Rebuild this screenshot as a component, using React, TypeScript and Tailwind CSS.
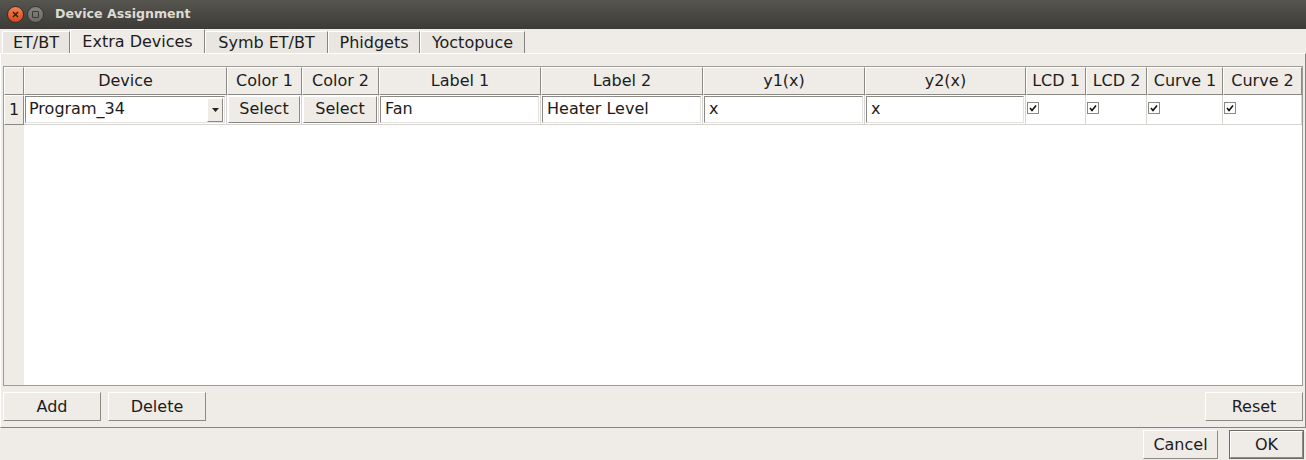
import React from "react";

const font = { fontFamily: '"DejaVu Sans", "Liberation Sans", sans-serif' };

const cols = [
  { label: "Device", w: 203 },
  { label: "Color 1", w: 75 },
  { label: "Color 2", w: 77 },
  { label: "Label 1", w: 162 },
  { label: "Label 2", w: 162 },
  { label: "y1(x)", w: 162 },
  { label: "y2(x)", w: 161 },
  { label: "LCD 1", w: 60 },
  { label: "LCD 2", w: 61 },
  { label: "Curve 1", w: 76 },
  { label: "Curve 2", w: 79 },
];

const tabs = [
  { text: "ET/BT", w: 68 },
  { text: "Extra Devices", w: 135, active: true },
  { text: "Symb ET/BT", w: 123 },
  { text: "Phidgets", w: 92 },
  { text: "Yoctopuce", w: 105 },
];

const raised =
  "bg-[#efebe7] border border-t-white border-l-white border-r-[#8c8985] border-b-[#8c8985]";
const sunken =
  "bg-white border border-t-[#8c8985] border-l-[#8c8985] border-r-[#e4e2de] border-b-[#e4e2de]";

const Button: React.FC<{ text: string; w: number; isDefault?: boolean }> = ({
  text,
  w,
  isDefault,
}) => (
  <div
    className={`h-[29px] flex items-center justify-center text-[16px] text-[#1c1c1c] ${
      isDefault ? "border border-[#6e6c68] p-0" : ""
    }`}
    style={{ width: w }}
  >
    <div className={`w-full h-full flex items-center justify-center ${raised}`}>
      {text}
    </div>
  </div>
);

const Check: React.FC = () => (
  <div className="w-[12px] h-[12px] bg-white border border-[#8c8985] flex items-center justify-center">
    <svg width="8" height="8" viewBox="0 0 8 8">
      <path d="M1 4 L3 6.5 L7 1.5" stroke="#111" strokeWidth="1.6" fill="none" />
    </svg>
  </div>
);

const TitleBar: React.FC = () => (
  <div className="h-[29px] flex items-center bg-linear-to-b from-[#57554f] to-[#3c3b37]">
    <div className="ml-[7px] w-[17px] h-[17px] rounded-full bg-linear-to-b from-[#f4814e] to-[#d9461a] border border-[#3a2a20] flex items-center justify-center">
      <svg width="7" height="7" viewBox="0 0 7 7">
        <path d="M1 1 L6 6 M6 1 L1 6" stroke="#3b2015" strokeWidth="1.6" />
      </svg>
    </div>
    <div className="ml-[3px] w-[17px] h-[17px] rounded-full bg-linear-to-b from-[#86847f] to-[#6c6a65] border border-[#35342f] flex items-center justify-center">
      <div className="w-[7px] h-[7px] rounded-[1px] border border-[#3a3935]" />
    </div>
    <span className="ml-[11px] text-[12.6px] font-bold text-[#dfdbd2]">
      Device Assignment
    </span>
  </div>
);

const Tabs: React.FC = () => (
  <div className="h-[24px] flex items-end pl-[2px]">
    {tabs.map((t) => (
      <div
        key={t.text}
        className={`flex items-center justify-center text-[16px] text-[#1c1c1c] border-l border-t border-r border-l-white border-t-white border-r-[#86837e] ${
          t.active ? "h-[24px] bg-[#efebe7]" : "h-[22px] bg-[#e9e6e1]"
        }`}
        style={{ width: t.w }}
      >
        {t.text}
      </div>
    ))}
  </div>
);

const Table: React.FC = () => (
  <div className="h-[320px] border border-[#9e9b96] bg-white flex flex-col">
    {/* header */}
    <div className="flex h-[28px]">
      <div className={`w-[20px] ${raised}`} />
      {cols.map((c) => (
        <div
          key={c.label}
          className={`flex items-center justify-center text-[16px] text-[#1c1c1c] ${raised}`}
          style={{ width: c.w }}
        >
          {c.label}
        </div>
      ))}
    </div>
    {/* row 1 */}
    <div className="flex h-[30px]">
      <div className={`w-[20px] flex items-center pl-[4px] pb-[1px] text-[16px] text-[#1c1c1c] ${raised}`}>
        1
      </div>
      {/* device combo */}
      <div className="w-[203px] border-r border-b border-[#d6d4d0] p-[1px]">
        <div className={`h-full flex items-center ${sunken}`}>
          <span className="flex-1 pl-[3px] pb-[1px] text-[16px] text-[#1c1c1c]">Program_34</span>
          <div className={`w-[16px] h-[24px] mr-[1px] flex items-center justify-center ${raised}`}>
            <svg width="7" height="4" viewBox="0 0 7 4">
              <path d="M0 0 L7 0 L3.5 4 Z" fill="#222" />
            </svg>
          </div>
        </div>
      </div>
      {[75, 77].map((w, i) => (
        <div key={i} className="border-r border-b border-[#d6d4d0] p-[1px]" style={{ width: w }}>
          <div className={`h-full flex items-center justify-center pb-[1px] text-[16px] text-[#1c1c1c] ${raised}`}>
            Select
          </div>
        </div>
      ))}
      {[
        { t: "Fan", w: 162 },
        { t: "Heater Level", w: 162 },
        { t: "x", w: 162 },
        { t: "x", w: 161 },
      ].map((f, i) => (
        <div key={i} className="border-r border-b border-[#d6d4d0] p-[1px]" style={{ width: f.w }}>
          <div className={`h-full flex items-center pl-[4px] pb-[1px] text-[16px] text-[#1c1c1c] ${sunken}`}>
            {f.t}
          </div>
        </div>
      ))}
      {[60, 61, 76, 79].map((w, i) => (
        <div
          key={i}
          className="border-r border-b border-[#d6d4d0] pl-[1px] pt-[7px]"
          style={{ width: w }}
        >
          <Check />
        </div>
      ))}
    </div>
    {/* empty body */}
    <div className="flex-1 flex">
      <div className="w-[20px] bg-[#efebe7]" />
      <div className="flex-1 bg-white" />
    </div>
  </div>
);

export default function App() {
  return (
    <div
      className="w-[1306px] h-[460px] bg-[#efebe7] flex flex-col overflow-hidden"
      style={font}
    >
      <TitleBar />
      <Tabs />
      <div className="h-[375px] border border-l-white border-t-white border-r-[#86837e] border-b-[#86837e] pt-[12px] px-[2px]">
        <Table />
        <div className="flex mt-[6px]">
          <Button text="Add" w={98} />
          <div className="w-[7px]" />
          <Button text="Delete" w={98} />
          <div className="flex-1" />
          <Button text="Reset" w={98} />
        </div>
      </div>
      <div className="flex justify-end gap-[11px] pr-[2px] mt-[2px]">
        <Button text="Cancel" w={75} />
        <Button text="OK" w={75} isDefault />
      </div>
    </div>
  );
}
